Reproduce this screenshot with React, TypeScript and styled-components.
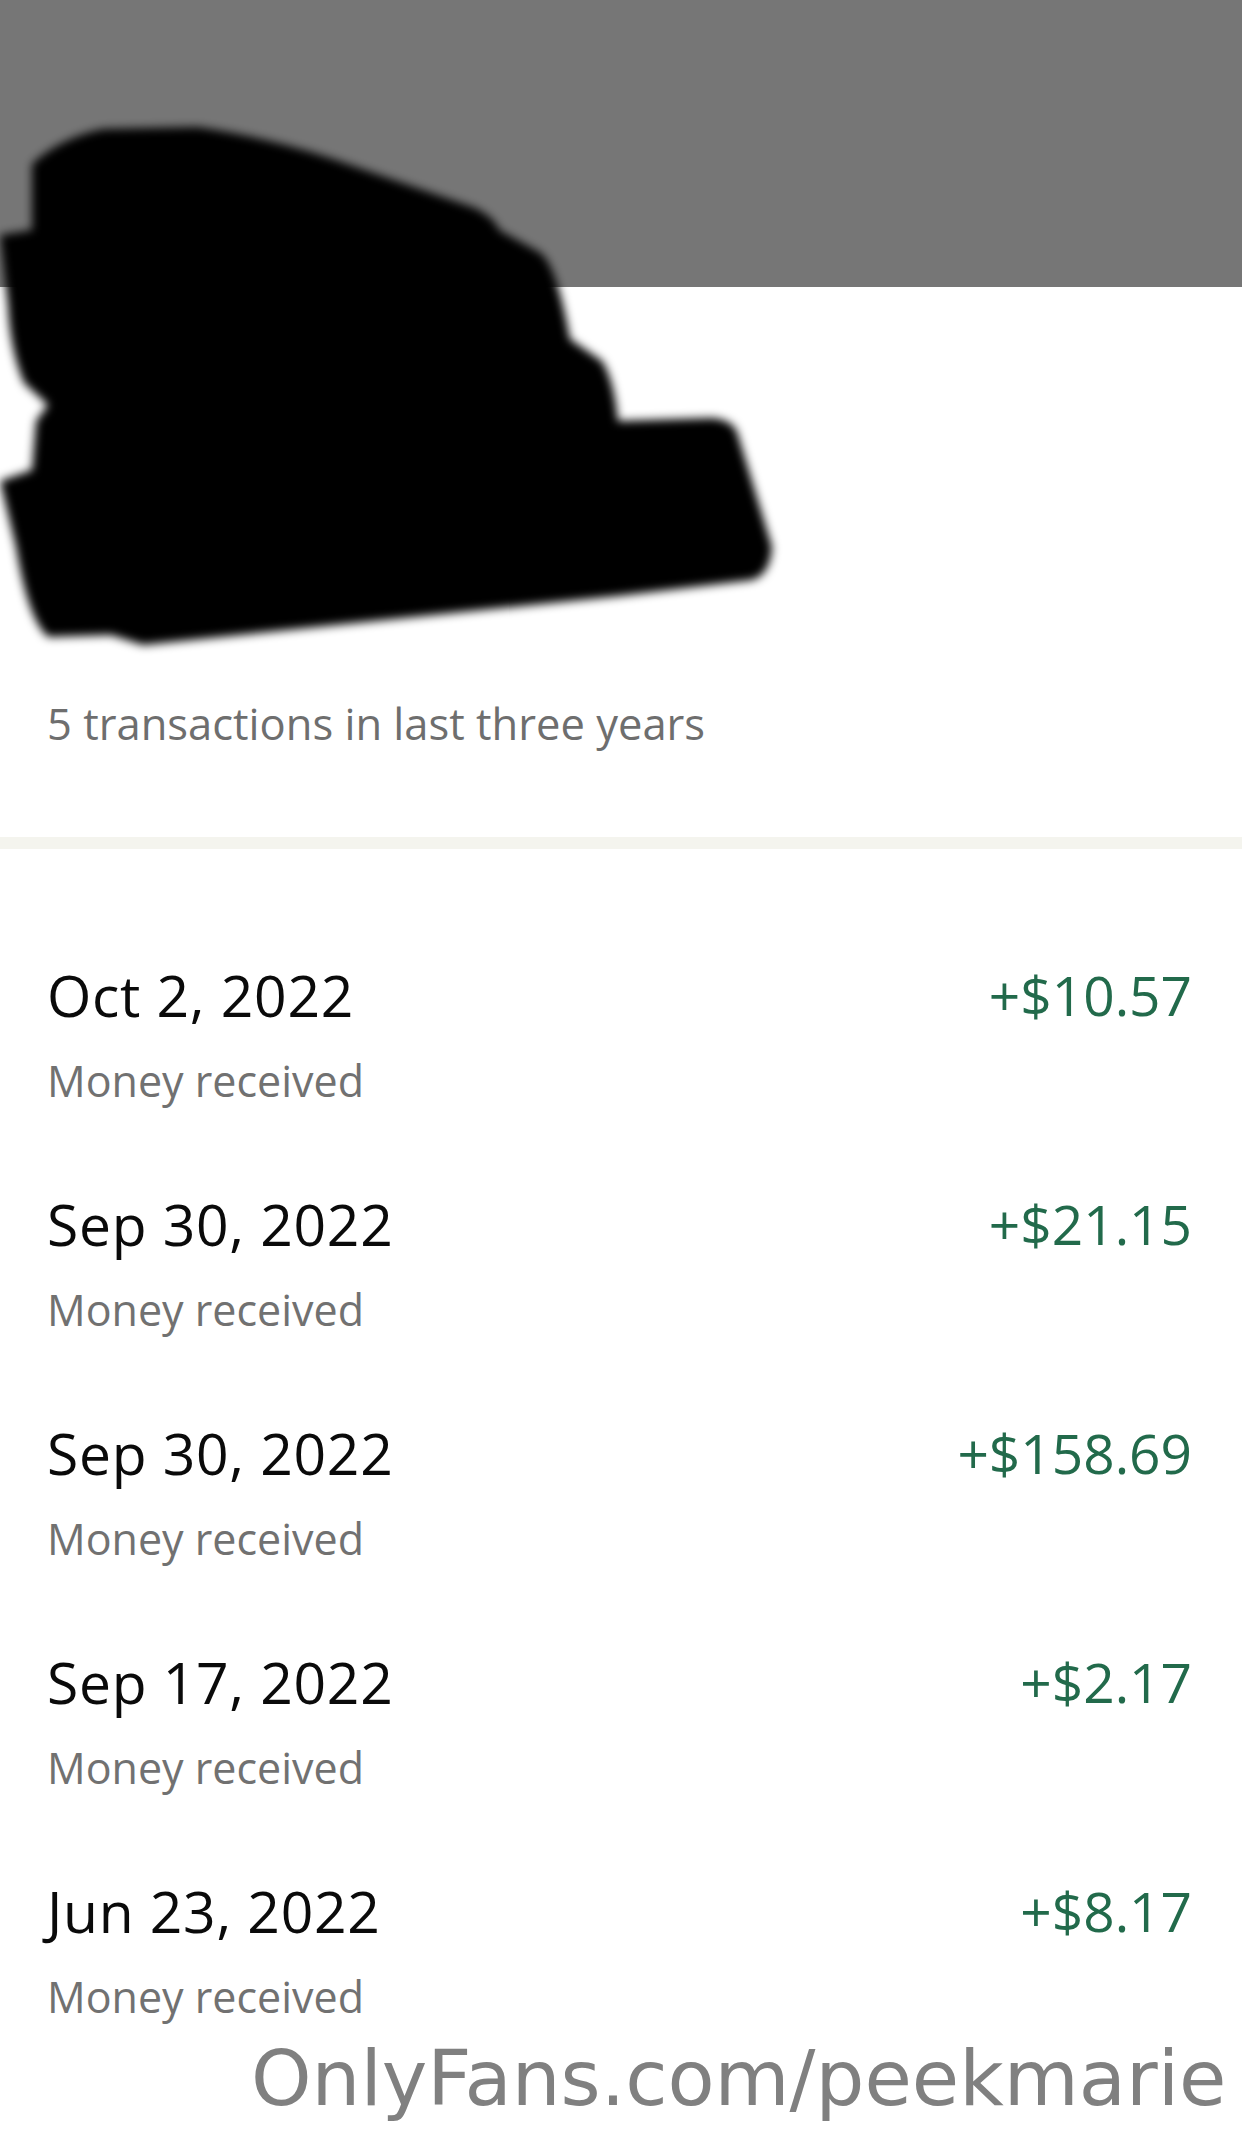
import { styled, createGlobalStyle } from 'styled-components';

const GlobalStyle = createGlobalStyle`
  html,
  body {
    margin: 0;
    padding: 0;
    background: #ffffff;
  }

  body {
    font-family: 'Open Sans', 'Noto Sans', sans-serif;
  }
`;

type Transaction = {
  date: string;
  label: string;
  amount: string;
};

const TRANSACTIONS: Transaction[] = [
  { date: 'Oct 2, 2022', label: 'Money received', amount: '+$10.57' },
  { date: 'Sep 30, 2022', label: 'Money received', amount: '+$21.15' },
  { date: 'Sep 30, 2022', label: 'Money received', amount: '+$158.69' },
  { date: 'Sep 17, 2022', label: 'Money received', amount: '+$2.17' },
  { date: 'Jun 23, 2022', label: 'Money received', amount: '+$8.17' },
];

// hand-drawn marker scribble that hides the contact name
const REDACTION_PATH =
  'M32 164 Q60 138 103 129 L198 127 Q270 138 333 159 L475 208 Q495 218 499 230 L539 252 Q556 262 570 339 ' +
  'L602 361 Q614 380 618 421 L713 418 Q732 420 737 432 L772 547 Q770 575 752 580 L618 596 L143 645 ' +
  'L111 635 L48 637 Q28 620 16 547 L0 481 L32 470 L36 421 L48 405 L24 383 Q10 350 8 306 L0 235 ' +
  'L32 230 Z';

export default function App() {
  return (
    <>
      <GlobalStyle />
      <Page>
        <Header />
        <Summary>
          <Subtitle>5 transactions in last three years</Subtitle>
        </Summary>
        <Divider />
        <List>
          {TRANSACTIONS.map((tx, i) => (
            <Row key={`tx-${i}`}>
              <RowText>
                <DateText>{tx.date}</DateText>
                <Caption>{tx.label}</Caption>
              </RowText>
              <Amount>{tx.amount}</Amount>
            </Row>
          ))}
        </List>

        <Redaction width="800" height="680" viewBox="0 0 800 680" aria-hidden="true">
          <defs>
            <filter id="marker-blur" x="-5%" y="-5%" width="110%" height="110%">
              <feGaussianBlur stdDeviation="5" />
            </filter>
          </defs>
          <path d={REDACTION_PATH} fill="#000000" filter="url(#marker-blur)" />
        </Redaction>

        <Watermark>OnlyFans.com/peekmarie</Watermark>
      </Page>
    </>
  );
}

const Page = styled.div`
  position: relative;
  width: 1242px;
  min-height: 2137px;
  overflow: hidden;
  background: #ffffff;
`;

const Header = styled.div`
  height: 287px;
  background: #767676;
`;

const Summary = styled.section`
  display: flex;
  flex-direction: column;
  justify-content: flex-end;
  height: 550px;
  padding: 0 50px 92px 47px;
  box-sizing: border-box;
`;

const Subtitle = styled.p`
  margin: 0;
  font-size: 43.5px;
  line-height: 1;
  color: #6e6e6e;
`;

const Divider = styled.div`
  height: 12px;
  background: #f4f4ee;
`;

const List = styled.ul`
  list-style: none;
  margin: 0;
  padding: 71px 0 0;
`;

const Row = styled.li`
  display: flex;
  justify-content: space-between;
  align-items: flex-start;
  padding: 47px 50px 47px 47px;
`;

const RowText = styled.div`
  display: flex;
  flex-direction: column;
  gap: 35px;
`;

const DateText = styled.span`
  font-size: 57px;
  font-weight: 500;
  letter-spacing: 0.7px;
  line-height: 1;
  color: #0a0a0a;
`;

const Caption = styled.span`
  font-size: 43px;
  line-height: 1;
  color: #717171;
`;

const Amount = styled.span`
  font-size: 55px;
  font-weight: 500;
  line-height: 1;
  color: #226a4b;
`;

const Redaction = styled.svg`
  position: absolute;
  top: 0;
  left: 0;
  pointer-events: none;
`;

const Watermark = styled.div`
  position: absolute;
  left: 251px;
  top: 2040px;
  font-family: 'DejaVu Sans', sans-serif;
  font-size: 77px;
  line-height: 1;
  color: #808080;
  white-space: nowrap;
`;
